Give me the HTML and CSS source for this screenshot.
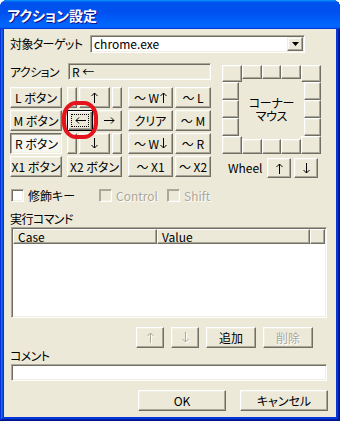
FILE: index.html
```html
<!DOCTYPE html>
<html lang="ja">
<head>
<meta charset="utf-8">
<title>アクション設定</title>
<link rel="stylesheet" href="styles.css">
</head>
<body>
<div class="window">
  <div class="titlebar"><span class="title">アクション設定</span></div>
  <div class="client">
    <div class="row-target">
      <span class="lbl lbl-target">対象ターゲット</span>
      <div class="combo">
        <span class="combo-text">chrome.exe</span>
        <span class="combo-btn"><svg width="7" height="4" viewBox="0 0 7 4"><path d="M0 0h7L3.5 4z" fill="#000"/></svg></span>
      </div>
    </div>

    <div class="mid">
      <div class="left">
        <div class="row-action">
          <span class="lbl lbl-action">アクション</span>
          <div class="field readonly">R ←</div>
        </div>

        <div class="bgrid">
          <button class="btn c1">L ボタン</button>
          <div class="c2 trio"><button class="btn narrow"></button><button class="btn arrow-mid"><svg class="ic" width="7" height="11" viewBox="0 0 7 11"><path d="M3.5 1V11M0.5 4L3.5 1L6.5 4"/></svg></button><button class="btn narrow"></button></div>
          <button class="btn c3">〜 W<svg class="ic in" width="7" height="11" viewBox="0 0 7 11"><path d="M3.5 1V11M0.5 4L3.5 1L6.5 4"/></svg></button>
          <button class="btn c4">〜 L</button>

          <button class="btn c1">M ボタン</button>
          <div class="c2 duo"><button class="btn default"><span class="focus"><svg class="ic" width="11" height="7" viewBox="0 0 11 7"><path d="M1 3.5H11M4 0.5L1 3.5L4 6.5"/></svg></span></button><button class="btn"><svg class="ic" width="11" height="7" viewBox="0 0 11 7"><path d="M0 3.5H10M7 0.5L10 3.5L7 6.5"/></svg></button></div>
          <button class="btn c3">クリア</button>
          <button class="btn c4">〜 M</button>

          <button class="btn c1 pressed">R ボタン</button>
          <div class="c2 trio"><button class="btn narrow"></button><button class="btn arrow-mid"><svg class="ic" width="7" height="11" viewBox="0 0 7 11"><path d="M3.5 0V10M0.5 7L3.5 10L6.5 7"/></svg></button><button class="btn narrow"></button></div>
          <button class="btn c3">〜 W<svg class="ic in" width="7" height="11" viewBox="0 0 7 11"><path d="M3.5 0V10M0.5 7L3.5 10L6.5 7"/></svg></button>
          <button class="btn c4">〜 R</button>

          <button class="btn c1">X1 ボタン</button>
          <button class="btn c2">X2 ボタン</button>
          <button class="btn c3">〜 X1</button>
          <button class="btn c4">〜 X2</button>
        </div>

        <div class="checks">
          <label class="chk chk-mod"><span class="box"></span><span>修飾キー</span></label>
          <label class="chk chk-ctrl disabled"><span class="box"></span><span>Control</span></label>
          <label class="chk chk-shift disabled"><span class="box"></span><span>Shift</span></label>
        </div>
      </div>

      <div class="right">
        <div class="corner">
          <button class="btn cell tl"></button>
          <button class="btn cell top"></button>
          <button class="btn cell top"></button>
          <button class="btn cell top"></button>
          <button class="btn cell tr"></button>

          <button class="btn cell side-l r2"></button>
          <button class="btn cell side-r r2"></button>
          <button class="btn cell side-l r3"></button>
          <button class="btn cell side-r r3"></button>
          <button class="btn cell side-l r4"></button>
          <button class="btn cell side-r r4"></button>

          <div class="corner-label">コーナー<br>マウス</div>

          <button class="btn cell bl"></button>
          <button class="btn cell bottom"></button>
          <button class="btn cell bottom"></button>
          <button class="btn cell bottom"></button>
          <button class="btn cell br"></button>
        </div>
        <div class="wheel">
          <span class="wheel-lbl">Wheel</span>
          <button class="btn wbtn"><svg class="ic" width="7" height="11" viewBox="0 0 7 11"><path d="M3.5 1V11M0.5 4L3.5 1L6.5 4"/></svg></button>
          <button class="btn wbtn"><svg class="ic" width="7" height="11" viewBox="0 0 7 11"><path d="M3.5 0V10M0.5 7L3.5 10L6.5 7"/></svg></button>
        </div>
      </div>
    </div>

    <div class="section-lbl sec-cmd">実行コマンド</div>
    <div class="listview">
      <div class="lv-header">
        <div class="hcol h-case">Case</div>
        <div class="hcol h-value">Value</div>
        <div class="hcol h-rest"></div>
      </div>
    </div>

    <div class="list-btns">
      <button class="btn small" disabled><svg class="ic dis-ic" width="7" height="11" viewBox="0 0 7 11"><path d="M3.5 1V11M0.5 4L3.5 1L6.5 4"/></svg></button>
      <button class="btn small" disabled><svg class="ic dis-ic" width="7" height="11" viewBox="0 0 7 11"><path d="M3.5 0V10M0.5 7L3.5 10L6.5 7"/></svg></button>
      <button class="btn wide add">追加</button>
      <button class="btn wide" disabled><span class="dis">削除</span></button>
    </div>

    <div class="section-lbl sec-comment">コメント</div>
    <div class="field comment"></div>

    <div class="dlg-btns">
      <button class="btn dlg ok">OK</button>
      <button class="btn dlg">キャンセル</button>
    </div>

    <div class="annot"></div>
  </div>
</div>
</body>
</html>
```

FILE: styles.css
```css
* { box-sizing: border-box; }

html, body {
  margin: 0;
  padding: 0;
}

body {
  width: 340px;
  height: 421px;
  overflow: hidden;
  background: #ffffff;
  font-family: "Noto Sans CJK JP", sans-serif;
  font-size: 12px;
  font-feature-settings: "palt" 1;
  color: #000;
  line-height: 1;
}

.ic {
  display: block;
  flex: none;
  fill: none;
  stroke: #000;
  stroke-width: 1;
}

.ic.in {
  margin-left: 1px;
}

.ic.dis-ic {
  stroke: #ACA899;
  filter: drop-shadow(1px 1px 0 #fff);
}

.window {
  width: 340px;
  height: 421px;
  background: #0831d9;
  border-radius: 8px 8px 0 0;
  display: flex;
  flex-direction: column;
  box-shadow: inset -1px -1px #00138c, inset 1px 1px #0831d9,
    inset -2px -2px #001ea0, inset 2px 2px #166aee,
    inset -3px -3px #003bda, inset 3px 3px #0855dd;
}

.titlebar {
  height: 29px;
  flex: none;
  border-radius: 7px 7px 0 0;
  background: linear-gradient(180deg, #0997ff, #0053ee 8%, #0050ee 40%, #0066ff 88%, #0066ff 93%, #005bff 95%, #003dd7 96%, #003dd7);
  display: flex;
  align-items: center;
  padding-left: 7px;
}

.title {
  color: #fff;
  font-weight: bold;
  font-size: 14px;
  text-shadow: 1px 1px #0f1089;
  margin-top: 1px;
}

.client {
  position: relative;
  flex: 1;
  margin: 0 4px 4px 4px;
  background: #ECE9D8;
  padding: 0 8px 0 6px;
  display: flex;
  flex-direction: column;
}

/* generic */
.lbl {
  flex: none;
  white-space: nowrap;
  letter-spacing: -0.6px;
}

.field {
  height: 17px;
  background: #fff;
  border: 1px solid;
  border-color: #ACA899 #fff #fff #ACA899;
  box-shadow: inset 1px 1px #716F64, inset -1px -1px #F1EFE2;
  display: flex;
  align-items: center;
  padding-left: 3px;
}

.field.readonly {
  background: #ECE9D8;
}

.btn {
  appearance: none;
  font: inherit;
  color: #000;
  margin: 0;
  padding: 0;
  height: 21px;
  background: #ECE9D8;
  border: 1px solid;
  border-color: #fff #716F64 #716F64 #fff;
  box-shadow: inset -1px -1px #ACA899, inset 1px 1px #F1EFE2;
  display: flex;
  align-items: center;
  justify-content: center;
  white-space: nowrap;
  line-height: 1;
}

.btn.pressed {
  background: #F7F6F1;
  border-color: #716F64 #fff #fff #716F64;
  box-shadow: inset 1px 1px #ACA899, inset -1px -1px #F1EFE2;
  padding-left: 1px;
  padding-top: 1px;
}

.btn.default {
  border: 1px solid #000;
  box-shadow: inset 1px 1px #fff, inset -1px -1px #716F64, inset -2px -2px #ACA899, inset 2px 2px #F1EFE2;
}

.focus {
  width: 18px;
  height: 13px;
  border: 1px dotted #000;
  display: flex;
  align-items: center;
  justify-content: center;
}

.dis {
  color: #ACA899;
  text-shadow: 1px 1px #fff;
}

/* target row */
.row-target {
  margin-top: 6px;
  height: 18px;
  display: flex;
  align-items: center;
}

.lbl-target {
  width: 80px;
}

.combo {
  width: 215px;
  height: 18px;
  background: #fff;
  border: 1px solid;
  border-color: #ACA899 #fff #fff #ACA899;
  box-shadow: inset 1px 1px #716F64, inset -1px -1px #F1EFE2;
  display: flex;
  align-items: center;
  padding: 1px;
}

.combo-text {
  flex: 1;
  padding-left: 2px;
}

.combo-btn {
  width: 16px;
  height: 14px;
  background: #ECE9D8;
  border: 1px solid;
  border-color: #F1EFE2 #716F64 #716F64 #F1EFE2;
  box-shadow: inset -1px -1px #ACA899, inset 1px 1px #fff;
  display: flex;
  align-items: center;
  justify-content: center;
}

/* middle */
.mid {
  display: flex;
  gap: 11px;
  height: 149px;
  flex: none;
}

.left {
  width: 201px;
  display: flex;
  flex-direction: column;
}

.row-action {
  margin-top: 10px;
  height: 17px;
  display: flex;
  align-items: center;
}

.lbl-action {
  width: 58px;
}

.row-action .field {
  width: 143px;
}

.bgrid {
  margin-top: 7px;
  display: grid;
  grid-template-columns: 52px 5px 55px 6px 45px 2px 36px;
  grid-auto-rows: 21px;
  row-gap: 2px;
}

.c1 { grid-column: 1; }
.c2 { grid-column: 3; }
.c3 { grid-column: 5; }
.c4 { grid-column: 7; }

.trio, .duo {
  display: flex;
  justify-content: space-between;
}

.trio .narrow { width: 10px; }
.trio .arrow-mid { width: 31px; }
.duo .btn { width: 26px; }

.checks {
  margin-top: 12px;
  height: 13px;
  display: flex;
  align-items: center;
}

.chk {
  display: flex;
  align-items: center;
  gap: 4px;
  white-space: nowrap;
}

.chk-mod { width: 89px; padding-left: 1px; }
.chk-ctrl { width: 68px; }

.box {
  width: 13px;
  height: 13px;
  background: #fff;
  border: 1px solid;
  border-color: #ACA899 #fff #fff #ACA899;
  box-shadow: inset 1px 1px #716F64, inset -1px -1px #F1EFE2;
  flex: none;
}

.chk.disabled .box {
  background: #ECE9D8;
  box-shadow: inset 1px 1px #ACA899, inset -1px -1px #F1EFE2;
}

.chk.disabled span:last-child {
  color: #ACA899;
  text-shadow: 1px 1px #fff;
}

.right {
  width: 100px;
  display: flex;
  flex-direction: column;
}

.corner {
  margin-top: 12px;
  display: grid;
  grid-template-columns: 20px 20px 19px 20px 20px;
  grid-template-rows: 17px 18px 18px 18px 18px;
  width: 99px;
}

.cell {
  width: 100%;
  height: 100%;
}

.cell.top { height: 14px; align-self: start; }
.cell.bottom { height: 15px; align-self: end; }
.cell.side-l { width: 17px; justify-self: start; grid-column: 1; }
.cell.side-r { width: 17px; justify-self: end; grid-column: 5; }
.cell.r2 { grid-row: 2; }
.cell.r3 { grid-row: 3; }
.cell.r4 { grid-row: 4; }

.corner-label {
  grid-column: 2 / 5;
  grid-row: 2 / 5;
  align-self: center;
  text-align: center;
  line-height: 13px;
  padding-bottom: 1px;
  letter-spacing: -0.3px;
}

.wheel {
  margin-top: 4px;
  height: 20px;
  display: flex;
  align-items: center;
}

.wheel-lbl {
  width: 45px;
  padding-left: 6px;
}

.wbtn {
  width: 24px;
  height: 20px;
  margin-right: 3px;
}

/* lower */
.section-lbl {
  height: 14px;
  display: flex;
  align-items: center;
  letter-spacing: -0.6px;
}

.sec-cmd { margin-top: 10px; }

.listview {
  margin: 1px 1px 0 1px;
  height: 91px;
  background: #fff;
  border: 1px solid;
  border-color: #ACA899 #fff #fff #ACA899;
  box-shadow: inset 1px 1px #716F64, inset -1px -1px #F1EFE2;
  padding: 1px;
}

.lv-header {
  display: flex;
  height: 15px;
}

.hcol {
  height: 15px;
  background: #ECE9D8;
  border: 1px solid;
  border-color: #fff #716F64 #716F64 #fff;
  box-shadow: inset -1px -1px #ACA899;
  display: flex;
  align-items: center;
  padding-left: 4px;
}

.h-case { width: 144px; }
.h-value { width: 153px; }
.h-rest { flex: 1; }

.list-btns {
  margin-top: 9px;
  height: 21px;
  display: flex;
  justify-content: flex-end;
  padding-right: 15px;
}

.btn.small { width: 28px; }
.btn.wide { width: 50px; }
.list-btns .btn + .btn { margin-left: 7px; }
.list-btns .add { margin-left: 14px; }

.sec-comment { margin-top: 1px; }

.comment {
  margin: 1px 1px 0 1px;
  height: 17px;
}

.dlg-btns {
  margin-top: 9px;
  display: flex;
  justify-content: flex-end;
  gap: 14px;
}

.btn.dlg { width: 88px; }

/* annotation overlay */
.annot {
  position: absolute;
  left: 58px;
  top: 72px;
  width: 36px;
  height: 38px;
  border: 4px solid #E5141C;
  border-radius: 14px / 16px;
  pointer-events: none;
}
```
